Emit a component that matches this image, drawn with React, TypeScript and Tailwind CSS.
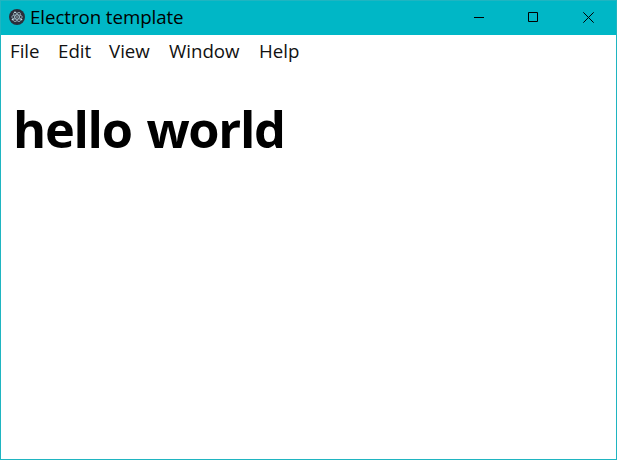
import React from "react";

const menus = [
  { label: "File", width: "w-[48px]" },
  { label: "Edit", width: "w-[51px]" },
  { label: "View", width: "w-[60px]" },
  { label: "Window", width: "w-[90px]" },
  { label: "Help", width: "w-[60px]" },
];

function ElectronLogo() {
  return (
    <svg width="16" height="16" viewBox="0 0 32 32" fill="none" stroke="#9fb9c4" strokeWidth="1.6">
      <circle cx="16" cy="16" r="16" fill="#2b2e3a" stroke="none" />
      <ellipse cx="16" cy="16" rx="10.5" ry="4.2" />
      <ellipse cx="16" cy="16" rx="10.5" ry="4.2" transform="rotate(60 16 16)" />
      <ellipse cx="16" cy="16" rx="10.5" ry="4.2" transform="rotate(120 16 16)" />
      <g fill="#c5e0e6" stroke="none">
        <circle cx="16" cy="16" r="1.5" />
        <circle cx="12" cy="6.5" r="1.7" />
        <circle cx="7" cy="21" r="1.7" />
        <circle cx="25" cy="21" r="1.7" />
      </g>
    </svg>
  );
}

function WindowButton({ d }: { d: string }) {
  return (
    <span className="flex h-[33px] w-[55px] items-center justify-center">
      <svg width="11" height="11" viewBox="0 0 11 11" fill="none" stroke="#000">
        <path d={d} />
      </svg>
    </span>
  );
}

export default function App() {
  return (
    <div className="flex h-[460px] w-[617px] flex-col border border-[#1fb5c1] bg-white font-['Open_Sans','Noto_Sans',sans-serif] text-black">
      <header className="flex h-[34px] shrink-0 items-start bg-[#00b7c6]">
        <span className="ml-2 mt-2"><ElectronLogo /></span>
        <span className="ml-[5px] flex-1 whitespace-nowrap text-[18.7px] leading-[32px] tracking-[-0.06px]">Electron template</span>
        <WindowButton d="M1 5.5h10" />
        <WindowButton d="M.5.5h9v9h-9z" />
        <WindowButton d="M.3.3l10.4 10.4M10.7.3L.3 10.7" />
      </header>
      <nav className="flex h-8 shrink-0 items-center pl-[9px] text-[18.7px] text-[#111]">
        {menus.map((m) => (
          <span key={m.label} className={m.width}>{m.label}</span>
        ))}
      </nav>
      <main className="pl-3 pt-[27px]">
        <h1 className="text-[50.5px] font-bold leading-[70px] tracking-[-1.3px] [word-spacing:3px]">hello world</h1>
      </main>
    </div>
  );
}
